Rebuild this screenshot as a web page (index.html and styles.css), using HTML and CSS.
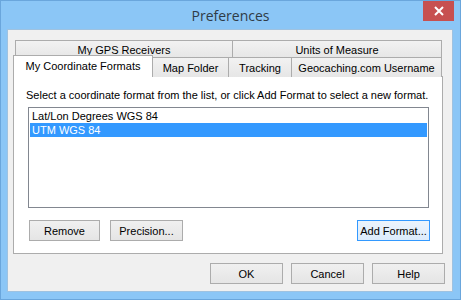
FILE: index.html
```html
<!DOCTYPE html>
<html>
<head>
<meta charset="utf-8">
<link rel="stylesheet" href="styles.css">
</head>
<body>
<div class="window">
  <div class="titlebar">
    <span class="title">Preferences</span>
    <div class="close">
      <svg width="10" height="10" viewBox="0 0 10 10"><path d="M1 1 L9 9 M9 1 L1 9" stroke="#fff" stroke-width="2" fill="none"/></svg>
    </div>
  </div>
  <div class="client">
    <div class="tabctl">
      <div class="tabrow row1">
        <div class="tab t-gps">My GPS Receivers</div>
        <div class="tab t-units">Units of Measure</div>
      </div>
      <div class="tabrow row2">
        <div class="tab t-coord selected">My Coordinate Formats</div>
        <div class="tab t-map">Map Folder</div>
        <div class="tab t-track">Tracking</div>
        <div class="tab t-geo">Geocaching.com Username</div>
      </div>
      <div class="panel">
        <div class="hint">Select a coordinate format from the list, or click Add Format to select a new format.</div>
        <div class="listbox">
          <div class="item">Lat/Lon Degrees WGS 84</div>
          <div class="item sel">UTM WGS 84</div>
        </div>
        <div class="btnrow">
          <button class="btn b-remove">Remove</button>
          <button class="btn b-prec">Precision...</button>
          <span class="spacer"></span>
          <button class="btn b-add focus">Add Format...</button>
        </div>
      </div>
    </div>
    <div class="footer">
      <button class="btn b-foot">OK</button>
      <button class="btn b-foot">Cancel</button>
      <button class="btn b-foot">Help</button>
    </div>
  </div>
</div>
</body>
</html>
```

FILE: styles.css
```css
html, body {
  margin: 0;
  padding: 0;
}
body {
  width: 461px;
  height: 300px;
  overflow: hidden;
  font-family: "Liberation Sans", Arial, sans-serif;
  font-size: 11px;
  color: #000;
}
.window {
  box-sizing: border-box;
  width: 461px;
  height: 300px;
  background: #8bc6f6;
  border: 1px solid #6aa6dc;
  display: flex;
  flex-direction: column;
}
.titlebar {
  height: 28px;
  position: relative;
  display: flex;
  align-items: center;
  justify-content: center;
}
.title {
  font-family: "Open Sans", sans-serif;
  font-size: 14px;
  color: #2f3b46;
  margin-top: 1px;
}
.close {
  position: absolute;
  left: 422px;
  top: 0;
  width: 31px;
  height: 20px;
  background: #c75050;
  display: flex;
  align-items: center;
  justify-content: center;
}
.client {
  box-sizing: border-box;
  margin: 0 7px 0 6px;
  height: 263px;
  background: #f0f0f0;
  border: 1px solid #9fc2e0;
  padding: 10px 8px 0 5px;
  display: flex;
  flex-direction: column;
}
.tabctl {
  width: 430px;
  display: flex;
  flex-direction: column;
}
.tabrow {
  display: flex;
  height: 17px;
}
.row1 {
  margin-left: 2px;
}
.row2 {
  height: 19px;
  position: relative;
  z-index: 1;
}
.tab {
  box-sizing: border-box;
  border: 1px solid #acacac;
  border-bottom: none;
  background: linear-gradient(#f2f2f2, #e6e6e6);
  display: flex;
  align-items: center;
  justify-content: center;
  white-space: nowrap;
  margin-right: -1px;
}
.row1 .tab {
  height: 18px;
  padding-top: 1px;
}
.t-gps { width: 218px; }
.t-units { width: 210px; }
.row2 .tab {
  height: 20px;
  padding-top: 1px;
}
.t-coord { width: 140px; }
.t-map { width: 77px; }
.t-track { width: 64px; }
.t-geo { width: 151px; }
.row2 .t-coord.selected {
  background: #fff;
  height: 22px;
  margin-top: -2px;
  padding-top: 0;
  padding-bottom: 2px;
  border-color: #acacac;
}
.panel {
  box-sizing: border-box;
  height: 178px;
  background: #fff;
  border: 1px solid #acacac;
  margin-top: 0;
  padding: 10px 12px 0 14px;
  display: flex;
  flex-direction: column;
}
.hint {
  line-height: 16px;
  margin-left: -2px;
  white-space: nowrap;
}
.listbox {
  box-sizing: border-box;
  margin-top: 4px;
  width: 401px;
  height: 101px;
  border: 1px solid #828790;
  padding: 1px;
}
.item {
  height: 14px;
  line-height: 14px;
  padding-left: 2px;
  white-space: nowrap;
}
.item.sel {
  background: #3399ff;
  color: #fff;
}
.btnrow {
  display: flex;
  margin-top: 12px;
  margin-left: 1px;
  margin-right: 0;
}
.spacer { flex: 1; }
.btn {
  box-sizing: border-box;
  height: 21px;
  font-family: "Liberation Sans", Arial, sans-serif;
  font-size: 11px;
  color: #000;
  border: 1px solid #acacac;
  background: linear-gradient(#f0f0f0, #e5e5e5);
  padding: 0;
  margin: 0;
  white-space: nowrap;
}
.b-remove { width: 71px; margin-right: 10px; }
.b-prec { width: 73px; }
.b-add { width: 73px; }
.btn.focus {
  border-color: #3399ff;
  background: linear-gradient(#ecf4fc, #dcecfc);
}
.footer {
  display: flex;
  justify-content: flex-end;
  gap: 8px;
  margin-top: 9px;
  margin-right: -1px;
}
.b-foot { width: 73px; }
```
